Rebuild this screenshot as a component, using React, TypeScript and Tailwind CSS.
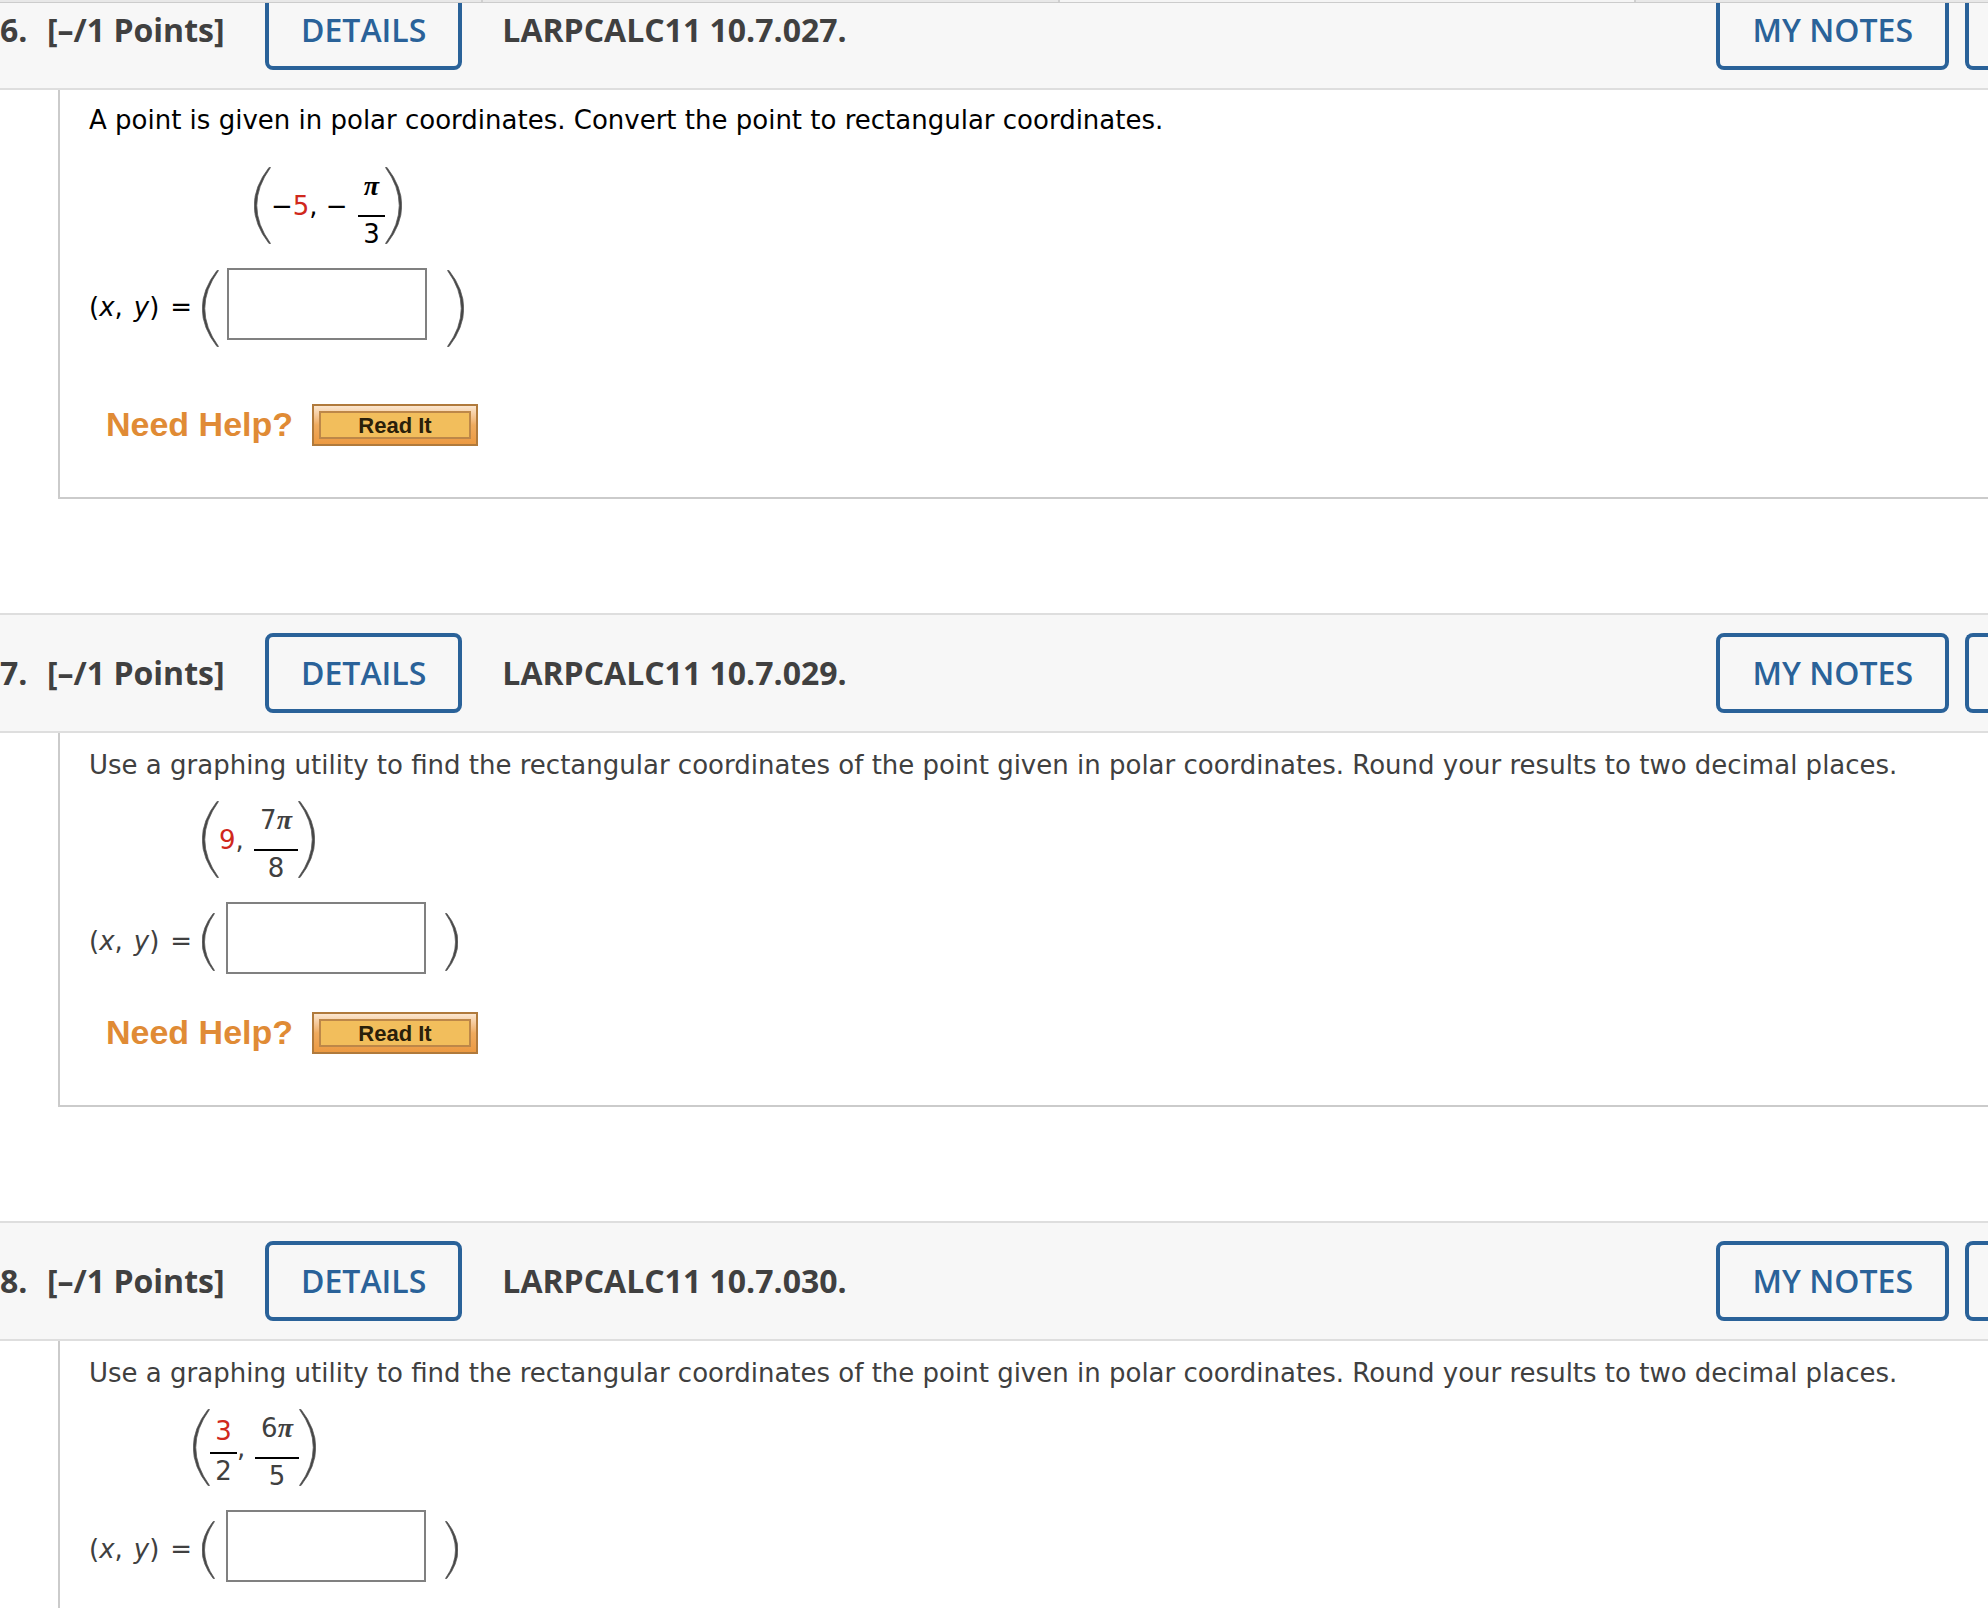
import type { ReactNode } from "react";

const RED = "text-[#d0281c]";

function Paren({ side, small }: { side: "left" | "right"; small?: boolean }) {
  const flip = side === "right";
  const w = small ? 13 : 17;
  const h = small ? 58 : 77;
  const d = small
    ? flip
      ? "M0.5 0.5Q20.5 29 0.5 57.5L1.8 57.5Q24 29 1.8 0.5Z"
      : "M12.5 0.5Q-7.5 29 12.5 57.5L11.2 57.5Q-11 29 11.2 0.5Z"
    : flip
      ? "M0.5 0.5Q28 38.5 0.5 76.5L2 76.5Q31.5 38.5 2 0.5Z"
      : "M16.5 0.5Q-11 38.5 16.5 76.5L15 76.5Q-14.5 38.5 15 0.5Z";
  return (
    <svg width={w} height={h} viewBox={`0 0 ${w} ${h}`} className="shrink-0 self-start" aria-hidden="true">
      <path d={d} fill="#444" stroke="#5a5a5a" strokeWidth="0.8" />
    </svg>
  );
}

function Pi() {
  return <i className="font-['Liberation_Serif',serif] text-[28px] leading-none font-bold">π</i>;
}

function Fraction({ top, bottom, wide }: { top: ReactNode; bottom: ReactNode; wide?: boolean }) {
  return (
    <span className={`flex flex-col self-start pt-[5px] text-center leading-7 ${wide ? "w-11" : "w-[27px]"}`}>
      <span className="h-7">{top}</span>
      <span className="mt-[15px] h-[2px] bg-black" />
      <span className="mt-[3px] h-7">{bottom}</span>
    </span>
  );
}

function CompactFraction({ top, bottom }: { top: ReactNode; bottom: ReactNode }) {
  return (
    <span className="flex w-[27px] flex-col self-start pt-2 text-center leading-7">
      <span className="h-7">{top}</span>
      <span className="mt-[7px] h-[2px] bg-black" />
      <span className="mt-[3px] h-7">{bottom}</span>
    </span>
  );
}

function OutlineButton({ children }: { children: ReactNode }) {
  return (
    <button
      type="button"
      className="h-20 shrink-0 rounded-lg border-4 border-[#2a6299] px-8 font-semibold whitespace-nowrap text-[#2a6299]"
    >
      {children}
    </button>
  );
}

function QuestionHeader({ num, code }: { num: number; code: string }) {
  return (
    <header className="flex h-[120px] items-center border-y-2 border-[#dedede] bg-[#f7f7f7] font-['Open_Sans',sans-serif] text-[32px] leading-10 text-[#404040]">
      <h2 className="flex w-[265px] shrink-0 font-bold whitespace-nowrap">
        <span className="w-[47px]">{num}.</span>
        <span>[–/1 Points]</span>
      </h2>
      <OutlineButton>DETAILS</OutlineButton>
      <span className="ml-10 font-bold whitespace-nowrap">{code}</span>
      <div className="ml-auto flex shrink-0 gap-4">
        <OutlineButton>MY NOTES</OutlineButton>
        <button
          type="button"
          aria-label="Ask your teacher"
          className="h-20 w-[23px] rounded-l-lg border-4 border-r-0 border-[#2a6299]"
        />
      </div>
    </header>
  );
}

function AnswerRow({ id, small }: { id: string; small?: boolean }) {
  return (
    <div className="flex h-[78px] items-start">
      <label htmlFor={id} className="mt-[23px] flex w-[113px] gap-[11px] whitespace-nowrap">
        <span>
          (<i>x</i>,
        </span>
        <span>
          <i>y</i>)
        </span>
        <span>=</span>
      </label>
      <span className={small ? "mt-[11px]" : "mt-[2px]"}>
        <Paren side="left" small={small} />
      </span>
      <input
        id={id}
        type="text"
        className={`h-[72px] w-[200px] border-2 border-[#808080] bg-white px-3 outline-none ${small ? "ml-[11px]" : "ml-2"}`}
      />
      <span className={small ? "mt-[11px] ml-[19px]" : "mt-[2px] ml-5"}>
        <Paren side="right" small={small} />
      </span>
    </div>
  );
}

function NeedHelp() {
  return (
    <div className="flex h-[42px] items-center pl-[17px] font-['Liberation_Sans',sans-serif] font-bold">
      <span className="w-[206px] pb-[2px] text-[34px] leading-10 whitespace-nowrap text-[#e08b35]">Need Help?</span>
      <button
        type="button"
        className="h-[42px] w-[166px] border-2 border-[#b07a3c] bg-linear-to-b from-[#fbe6cf] via-[#efab5e] to-[#ec9a42] px-[5px] py-[5px] text-[22px] text-[#2a200a]"
      >
        <span className="flex h-7 items-center justify-center border-2 border-[#bd8748] bg-[#f2be5c] pt-[2px]">
          Read It
        </span>
      </button>
    </div>
  );
}

type QuestionProps = {
  num: number;
  code: string;
  prompt: string;
  point: ReactNode;
  pointIndent: string;
  roomy?: boolean;
  help?: boolean;
};

function Question({ num, code, prompt, point, pointIndent, roomy, help }: QuestionProps) {
  return (
    <section className="mb-[114px]">
      <QuestionHeader num={num} code={code} />
      <div
        className={`ml-[58px] border-b-2 border-l-2 border-[#cbcbcb] pb-[51px] pl-[29px] font-['DejaVu_Sans',sans-serif] text-[26px] leading-8 ${
          roomy ? "pt-[14px] text-black" : "pt-4 text-[#404040]"
        }`}
      >
        <p className="whitespace-nowrap">{prompt}</p>
        <div className={`flex h-[78px] items-center ${roomy ? "mt-[31px]" : "mt-5"} ${pointIndent}`}>
          <Paren side="left" />
          {point}
          <Paren side="right" />
        </div>
        <div className="mt-[23px]">
          <AnswerRow id={`answer-${num}`} small={!roomy} />
        </div>
        {help && (
          <div className={roomy ? "mt-[58px]" : "mt-8"}>
            <NeedHelp />
          </div>
        )}
      </div>
    </section>
  );
}

const GRAPHING_PROMPT =
  "Use a graphing utility to find the rectangular coordinates of the point given in polar coordinates. Round your results to two decimal places.";

export default function App() {
  return (
    <main className="relative h-screen overflow-hidden bg-white">
      <div className="absolute inset-x-0 top-0 z-10 flex h-[3px] border-b border-[#cccccc] bg-[#e8e8e8]">
        <span className="w-[483px] border-r-2 border-[#d0d0d0]" />
        <span className="w-[577px] border-r-2 border-[#d0d0d0]" />
        <span className="w-[576px] border-r-2 border-[#d0d0d0] bg-[#f5f5f5]" />
      </div>
      <div className="-mt-[30px]">
        <Question
          num={6}
          code="LARPCALC11 10.7.027."
          prompt="A point is given in polar coordinates. Convert the point to rectangular coordinates."
          pointIndent="pl-[165px]"
          roomy
          help
          point={
            <>
              <span className="w-[87px] whitespace-nowrap">
                −<span className={RED}>5</span>, −
              </span>
              <Fraction top={<Pi />} bottom="3" />
            </>
          }
        />
        <Question
          num={7}
          code="LARPCALC11 10.7.029."
          prompt={GRAPHING_PROMPT}
          pointIndent="pl-[113px]"
          help
          point={
            <>
              <span className="w-[35px]">
                <span className={RED}>9</span>,
              </span>
              <Fraction wide top={<>7<Pi /></>} bottom="8" />
            </>
          }
        />
        <Question
          num={8}
          code="LARPCALC11 10.7.030."
          prompt={GRAPHING_PROMPT}
          pointIndent="pl-[104px]"
          point={
            <>
              <CompactFraction top={<span className={RED}>3</span>} bottom="2" />
              <span className="w-[18px]">,</span>
              <Fraction wide top={<>6<Pi /></>} bottom="5" />
            </>
          }
        />
      </div>
    </main>
  );
}
